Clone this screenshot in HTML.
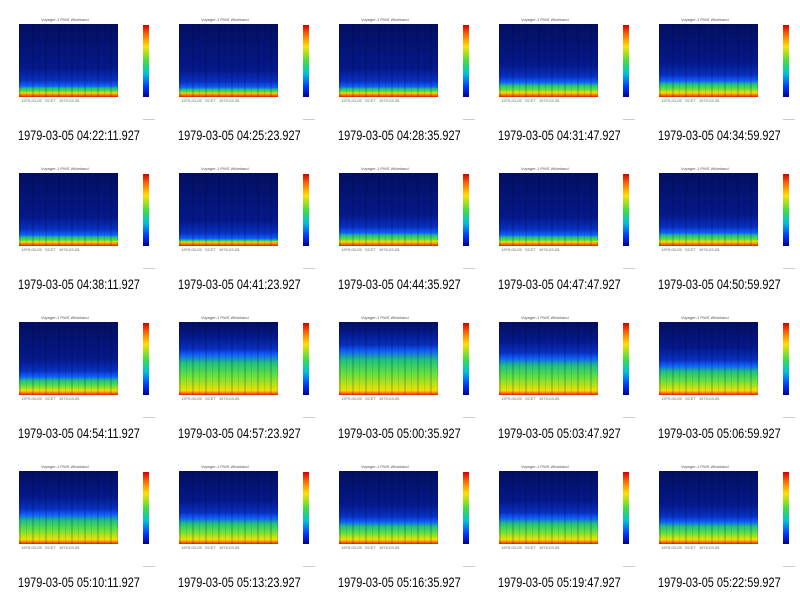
<!DOCTYPE html>
<html><head><style>
body{margin:0;width:800px;height:596px;background:#fff;position:relative;overflow:hidden;font-family:"Liberation Sans",sans-serif}
.c{position:absolute;width:160px;height:149px}
.t{position:absolute;left:41px;top:17px;font:4px "Liberation Sans",sans-serif;color:#555}
.p{position:absolute;left:19px;top:24px;width:99px;height:73px}
.s{position:absolute;left:0;top:0;width:100%;height:100%;background:repeating-linear-gradient(to right,rgba(0,0,40,.15) 0 2px,transparent 2px 7px,rgba(0,0,40,.1) 7px 8px,transparent 8px 13px)}
.ax{position:absolute;left:19px;top:99px;width:100px;height:8px;font:4px "Liberation Sans",sans-serif;color:#666;line-height:4px}
.cb{position:absolute;left:143px;top:25px;width:6px;height:72px;background:linear-gradient(to bottom,#d00000,#ff6000 12%,#ffe000 30%,#40e040 50%,#00c0e0 68%,#0040ff 85%,#000090)}
.cap{position:absolute;left:18px;top:127px;font-size:14px;color:#000;white-space:nowrap;transform:scaleX(0.78);transform-origin:0 0}
.sm{position:absolute;left:143px;top:119px;width:12px;height:1px;background:#ccc}
</style></head><body>
<div id="g"></div>
<script>
const caps=["04:22:11","04:25:23","04:28:35","04:31:47","04:34:59","04:38:11","04:41:23","04:44:35","04:47:47","04:50:59","04:54:11","04:57:23","05:00:35","05:03:47","05:06:59","05:10:11","05:13:23","05:16:35","05:19:47","05:22:59"];
const band=[15,13,14,20,22,15,10,18,15,18,25,55,60,50,40,40,35,30,35,30];
let h="";
for(let i=0;i<20;i++){
 const r=Math.floor(i/5),c=i%5,b=band[i];
 const bg=`linear-gradient(to top,#e02000 0%,#ff8000 3%,#f0e000 6%,#60e040 ${b*0.5}%,#20c080 ${b*0.8}%,#1060ff ${b}%,#0830c0 ${b+8}%,#04188a ${b+25}%,#030f60 100%)`;
 h+=`<div class="c" style="left:${c*160}px;top:${r*149}px">
 <div class="t">Voyager-1 PWS Wideband</div>
 <div class="p" style="background:${bg}"><div class="s"></div></div>
 <div class="ax">&nbsp; 1979-03-05 &nbsp; SCET &nbsp; 1979-03-05</div>
 <div class="cb"></div><div class="sm"></div>
 <div class="cap">1979-03-05 ${caps[i]}.927</div></div>`;
}
document.getElementById("g").innerHTML=h;
</script>
</body></html>
